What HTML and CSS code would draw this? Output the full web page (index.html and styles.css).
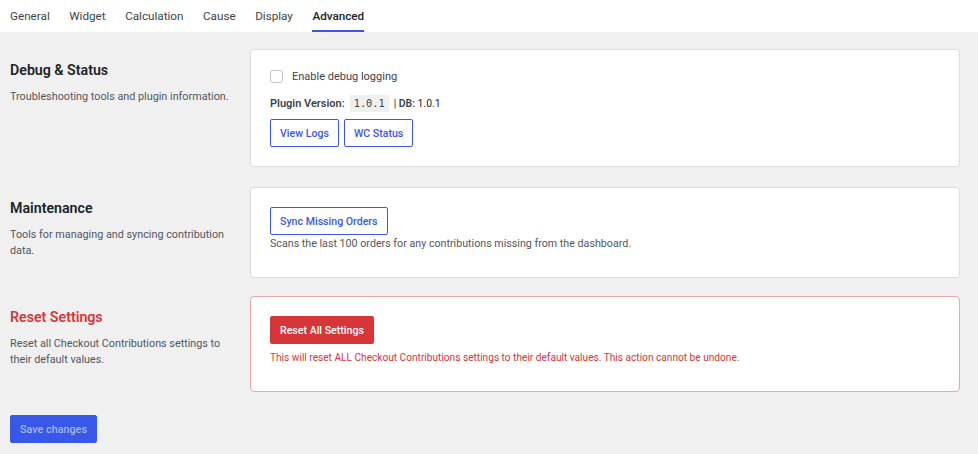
FILE: index.html
```html
<!DOCTYPE html>
<html lang="en">
<head>
<meta charset="utf-8">
<title>Advanced Settings</title>
<link rel="stylesheet" href="styles.css">
</head>
<body>
<nav class="tabs">
  <a class="tab">General</a>
  <a class="tab">Widget</a>
  <a class="tab">Calculation</a>
  <a class="tab">Cause</a>
  <a class="tab">Display</a>
  <a class="tab active">Advanced</a>
</nav>
<main class="page">
  <section class="section">
    <div class="info">
      <h2 class="title">Debug &amp; Status</h2>
      <p class="desc">Troubleshooting tools and plugin information.</p>
    </div>
    <div class="card">
      <label class="check-row"><span class="checkbox"></span><span>Enable debug logging</span></label>
      <div class="version"><b>Plugin Version:</b> <code class="code">1.0.1</code> <span class="db">| <b>DB:</b> 1.0.1</span></div>
      <div class="btn-row">
        <button class="btn">View Logs</button>
        <button class="btn">WC Status</button>
      </div>
    </div>
  </section>
  <section class="section section-tight">
    <div class="info">
      <h2 class="title">Maintenance</h2>
      <p class="desc">Tools for managing and syncing contribution data.</p>
    </div>
    <div class="card">
      <button class="btn">Sync Missing Orders</button>
      <p class="note">Scans the last 100 orders for any contributions missing from the dashboard.</p>
    </div>
  </section>
  <section class="section">
    <div class="info">
      <h2 class="title danger-title">Reset Settings</h2>
      <p class="desc">Reset all Checkout Contributions settings to their default values.</p>
    </div>
    <div class="card danger-card">
      <button class="btn btn-danger">Reset All Settings</button>
      <p class="note danger-note">This will reset ALL Checkout Contributions settings to their default values. This action cannot be undone.</p>
    </div>
  </section>
  <div class="save-row">
    <button class="btn-save">Save changes</button>
  </div>
</main>
</body>
</html>
```
FILE: styles.css
```css
* { box-sizing: border-box; }
html, body { margin: 0; padding: 0; }
body {
  background: #f0f0f1;
  font-family: Roboto, "Noto Sans", sans-serif;
  font-size: 11px;
  color: #3c434a;
}
.tabs {
  background: #fff;
  height: 32px;
  display: flex;
  gap: 19.5px;
  padding-left: 10px;
}
.tab {
  display: flex;
  align-items: center;
  height: 32px;
  font-size: 11.7px;
  color: #3c434a;
  border-bottom: 2px solid transparent;
  padding-top: 1px;
}
.tab.active {
  color: #1d2327;
  font-weight: 500;
  border-bottom-color: #3858e9;
}
.page {
  padding: 17px 18px 0 10px;
}
.section {
  display: grid;
  grid-template-columns: 220px 1fr;
  gap: 20px;
  margin-bottom: 20px;
}
.section-tight { margin-bottom: 18px; }
.info { padding-top: 11px; }
.title {
  margin: 0 0 9px;
  font-size: 14.2px;
  font-weight: 600;
  color: #1d2327;
  line-height: 20px;
}
.danger-title { color: #d63638; }
.desc {
  margin: 0;
  font-size: 10.8px;
  line-height: 16px;
  color: #50575e;
}
.card {
  background: #fff;
  border: 1px solid #dcdcde;
  border-radius: 4px;
  padding: 19px;
}
.danger-card { border-color: #f0a5a6; }
.check-row {
  display: flex;
  align-items: center;
  gap: 9px;
  height: 14px;
  margin-bottom: 11px;
  font-size: 11px;
  color: #3c434a;
}
.checkbox {
  width: 13px;
  height: 13px;
  border: 1px solid #c3c4c7;
  border-radius: 3px;
  background: #fff;
}
.version {
  display: flex;
  align-items: center;
  gap: 4px;
  height: 18px;
  font-size: 11px;
  color: #1d2327;
  margin-bottom: 7px;
}
.version b { font-weight: 600; color: #3c434a; }
.db { font-size: 10.4px; }
.code {
  font-family: "DejaVu Sans Mono", monospace;
  font-size: 10.3px;
  background: #f0f0f1;
  color: #3c434a;
  padding: 0 4px;
  height: 17px;
  line-height: 17px;
  margin: 0 1px;
}
.btn-row { display: flex; gap: 5px; }
.btn {
  font-family: inherit;
  font-size: 10.6px;
  font-weight: 500;
  color: #3858e9;
  background: #fff;
  border: 1px solid #3858e9;
  border-radius: 2px;
  height: 28px;
  padding: 0 9px;
  cursor: pointer;
}
.btn-danger {
  background: #d63638;
  border-color: #d63638;
  color: #fff;
}
.note {
  margin: 1px 0 6px;
  font-size: 10.7px;
  line-height: 16px;
  color: #50575e;
}
.danger-note { color: #d63638; margin-top: 6px; font-size: 10.15px; }
.save-row { padding-top: 3px; }
.btn-save {
  font-family: inherit;
  font-size: 10.8px;
  font-weight: 500;
  color: #a7b5f4;
  background: #3858e9;
  border: 1px solid #3858e9;
  border-radius: 2px;
  height: 28px;
  padding: 0 9px;
}
```
